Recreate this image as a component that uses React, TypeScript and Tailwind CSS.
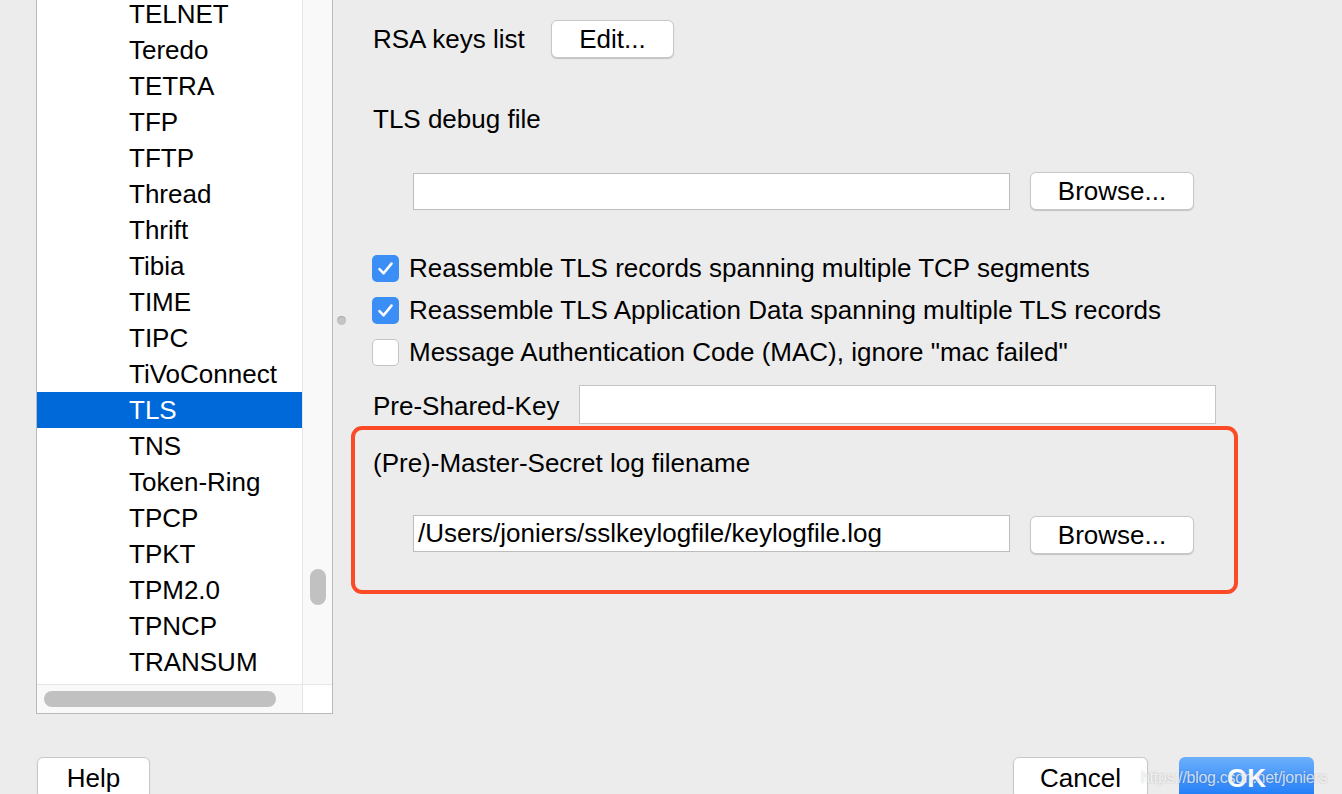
import React from "react"

const protocols = [
  "TELNET", "Teredo", "TETRA", "TFP", "TFTP", "Thread", "Thrift", "Tibia", "TIME", "TIPC",
  "TiVoConnect", "TLS", "TNS", "Token-Ring", "TPCP", "TPKT", "TPM2.0", "TPNCP", "TRANSUM",
]

function MacButton({ label, className }: { label: string; className: string }) {
  return (
    <button
      className={`flex items-center justify-center rounded-[6px] border border-[#c8c8c8] bg-white text-[26px] text-black shadow-[0_1px_1px_rgba(0,0,0,0.18)] ${className}`}
    >
      {label}
    </button>
  )
}

function Checkbox({ checked }: { checked: boolean }) {
  if (!checked) {
    return <div className="h-[27px] w-[27px] shrink-0 rounded-[5px] border border-[#c4c4c4] bg-white" />
  }
  return (
    <div className="flex h-[27px] w-[27px] shrink-0 items-center justify-center rounded-[5px] bg-[#3b8ef6]">
      <svg width="17" height="15" viewBox="0 0 17 15" fill="none">
        <path d="M2.5 8.2 L6.6 12.3 L14.5 2.6" stroke="white" strokeWidth="2.6" strokeLinecap="round" strokeLinejoin="round" />
      </svg>
    </div>
  )
}

function CheckRow({ checked, label, className = "" }: { checked: boolean; label: string; className?: string }) {
  return (
    <div className={`flex h-[28px] items-center pl-[21px] ${className}`}>
      <Checkbox checked={checked} />
      <span className="ml-[10px] whitespace-nowrap">{label}</span>
    </div>
  )
}

export default function App() {
  return (
    <div
      className="relative h-[794px] w-[1342px] overflow-hidden bg-[#ececec] text-[26px] text-black"
      style={{ fontFamily: '"Liberation Sans", Arial, sans-serif' }}
    >
      <div className="flex h-[714px]">
        {/* protocol list panel */}
        <div className="ml-[36px] flex w-[297px] flex-col border-x border-b border-[#b9b9b9] bg-white">
          <div className="flex flex-1 overflow-hidden">
            <div className="w-[265px] overflow-hidden">
              <div className="-mt-[4px]">
                {protocols.map((p) => (
                  <div
                    key={p}
                    className={`flex h-[36px] items-center pl-[92px] leading-none ${p === "TLS" ? "bg-[#0069d9] text-white" : ""}`}
                  >
                    {p}
                  </div>
                ))}
              </div>
            </div>
            <div className="relative flex-1 border-l border-[#e6e6e6] bg-[#f9f9f9]">
              <div className="absolute left-[7px] top-[569px] h-[36px] w-[16px] rounded-full bg-[#c1c1c1]" />
            </div>
          </div>
          <div className="flex h-[29px] border-t border-[#e6e6e6]">
            <div className="flex w-[265px] items-center bg-[#f9f9f9] pl-[7px]">
              <div className="h-[16px] w-[232px] rounded-full bg-[#c1c1c1]" />
            </div>
            <div className="flex-1 border-l border-[#e6e6e6] bg-white" />
          </div>
        </div>

        {/* splitter handle */}
        <div className="w-[18px] pt-[316px] pl-[4px]">
          <div className="h-[9px] w-[9px] rounded-full bg-[#c4c4c4] shadow-[inset_0_1px_1px_rgba(0,0,0,0.15)]" />
        </div>

        {/* preferences */}
        <div className="flex w-[887px] flex-col">
          <div className="mt-[20px] flex h-[38px] items-center pl-[22px]">
            <span className="w-[178px] whitespace-nowrap">RSA keys list</span>
            <MacButton label="Edit..." className="h-[38px] w-[123px]" />
          </div>

          <div className="mt-[42px] flex h-[38px] items-center pl-[22px]">TLS debug file</div>

          <div className="mt-[34px] flex h-[38px] items-center pl-[62px]">
            <div className="h-[37px] w-[597px] border border-[#bdbdbd] bg-white" />
            <MacButton label="Browse..." className="ml-[20px] h-[38px] w-[164px]" />
          </div>

          <CheckRow checked label="Reassemble TLS records spanning multiple TCP segments" className="mt-[44px]" />
          <CheckRow checked label="Reassemble TLS Application Data spanning multiple TLS records" className="mt-[14px]" />
          <CheckRow checked={false} label={'Message Authentication Code (MAC), ignore "mac failed"'} className="mt-[14px]" />

          <div className="mt-[19px] flex h-[39px] items-center pl-[22px]">
            <span className="w-[206px] whitespace-nowrap pt-[4px]">Pre-Shared-Key</span>
            <div className="h-[39px] w-[637px] border border-[#c4c4c4] bg-white" />
          </div>

          <div className="mt-[2px] h-[168px] rounded-[11px] border-[4px] border-[#fb4a26]">
            <div className="mt-[19px] flex h-[28px] items-center pl-[18px]">(Pre)-Master-Secret log filename</div>
            <div className="mt-[38px] flex items-start pl-[58px]">
              <div className="flex h-[37px] w-[597px] items-center border border-[#bdbdbd] bg-white pl-[4px]">
                /Users/joniers/sslkeylogfile/keylogfile.log
              </div>
              <MacButton label="Browse..." className="ml-[20px] mt-[1px] h-[38px] w-[164px]" />
            </div>
          </div>
        </div>
      </div>

      {/* dialog buttons */}
      <div className="mt-[43px] flex items-start pl-[37px] pr-[28px]">
        <MacButton label="Help" className="h-[42px] w-[113px]" />
        <div className="flex-1" />
        <MacButton label="Cancel" className="h-[42px] w-[135px]" />
        <button className="ml-[31px] flex h-[42px] w-[135px] items-center justify-center rounded-[6px] bg-gradient-to-b from-[#6cb0fd] to-[#1579f7] text-[26px] font-bold text-white">
          OK
        </button>
      </div>

      {/* watermark */}
      <div className="absolute left-[1141px] top-[766px] whitespace-nowrap text-[16px] tracking-[-0.3px] text-white/75 [text-shadow:0_0_2px_rgba(0,0,0,0.25)]">
        https://blog.csdn.net/joniers
      </div>
    </div>
  )
}
